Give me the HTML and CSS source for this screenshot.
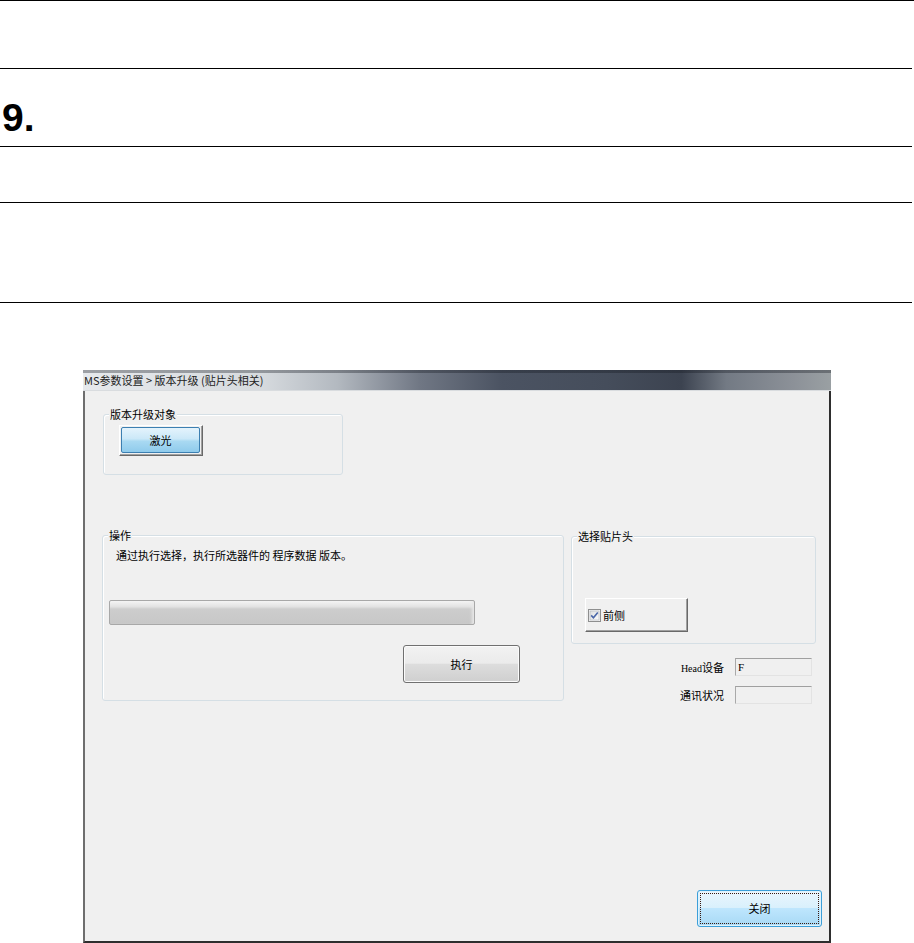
FILE: index.html
```html
<!DOCTYPE HTML>
<html>
    <head>
        <meta charset="UTF-8">
        <title>版本升级 (贴片头相关)</title>
        <link rel="stylesheet" href="styles.css">
    </head>
    <body>
        <div class="doc">
            <div class="row r1"></div>
            <div class="row r2"><h2 class="num">9.</h2></div>
            <div class="row r3"></div>
            <div class="row r4"></div>
        </div>

        <div class="window">
            <div class="titlebar">MS参数设置 &gt; 版本升级 (贴片头相关)</div>
            <div class="client">
                <div class="group g-target">
                    <div class="group-title">版本升级对象</div>
                    <div class="raised btn-laser"><span class="face">激光</span></div>
                </div>

                <div class="middle">
                    <div class="group g-op">
                        <div class="group-title">操作</div>
                        <p class="hint">通过执行选择，执行所选器件的 程序数据 版本。</p>
                        <div class="progress"></div>
                        <div class="btn btn-exec">执行</div>
                    </div>

                    <div class="side">
                        <div class="group g-head">
                            <div class="group-title">选择贴片头</div>
                            <div class="raised check-btn">
                                <svg class="checkbox" width="13" height="13" viewBox="0 0 13 13">
                                    <defs>
                                        <linearGradient id="cbfill" x1="0" y1="0" x2="1" y2="1">
                                            <stop offset="0" stop-color="#dcdedf"/>
                                            <stop offset="1" stop-color="#fbfbfb"/>
                                        </linearGradient>
                                    </defs>
                                    <rect x="0.5" y="0.5" width="12" height="12" fill="#f4f4f4" stroke="#8e8f8f"/>
                                    <rect x="2" y="2" width="9" height="9" fill="url(#cbfill)" stroke="#aeb3b9" stroke-width="0.6"/>
                                    <path d="M3.2 6.4 L5.4 8.8 L9.8 3.4" fill="none" stroke="#4a66a8" stroke-width="1.6"/>
                                </svg>
                                <span>前侧</span>
                            </div>
                        </div>
                        <div class="field-row">
                            <span class="field-label"><span class="latin">Head</span>设备</span>
                            <span class="field">F</span>
                        </div>
                        <div class="field-row">
                            <span class="field-label">通讯状况</span>
                            <span class="field"></span>
                        </div>
                    </div>
                </div>

                <div class="footer">
                    <div class="btn-close"><span class="focus">关闭</span></div>
                </div>
            </div>
        </div>
    </body>
</html>
```

FILE: styles.css
```css
body{margin:0;background:#ffffff;font-family:"Liberation Sans",Arial,sans-serif;color:#000;}
h2,p{margin:0;}

/* 文档表格线 */
.doc{border-top:1px solid #000;}
.doc .row{
    width: 912px;
    border-bottom: 1px solid #000;
}
.doc .r1{height:67px;}
.doc .r2{height:77px;}
.doc .r3{height:55px;}
.doc .r4{height:99px;}
.doc .num{
    padding: 29px 0 0 2px;
    font-size: 39px;
    line-height: 40px;
    font-weight: bold;
}

/* 窗口 */
.window{
    width: 748px;
    margin: 67px 0 0 83px;
    font-family: "Noto Sans CJK SC","Liberation Sans",sans-serif;
    font-size: 11px;
    color: #000;
}
.window .titlebar{
    height: 20px;
    padding-left: 1px;
    line-height: 20px;
    font-size: 11px;
    color: #222222;
    border-bottom: 1px solid #d9dcdf;
    background:
        linear-gradient(to bottom, rgba(20,24,32,.35) 0, rgba(20,24,32,.35) 3px, rgba(255,255,255,0) 3px),
        linear-gradient(to right, #e6e9ec 0%, #d6dade 24%, #b3b9c0 34%, #707784 45%, #4b5362 56%, #454d5b 70%, #3c4350 80%, #737a84 86%, #8c9198 95%, #9aa0a3 100%);
    white-space: nowrap;
}
.window .client{
    display: flex;
    flex-direction: column;
    height: 550px;
    background: #f0f0f0;
    border-left: 2px solid #6e6e6e;
    border-right: 2px solid #2e2e2e;
    border-bottom: 2px solid #2e2e2e;
}

/* 分组框 */
.group{
    box-sizing: border-box;
    border: 1px solid #d5dfe5;
    border-radius: 3px;
    box-shadow: inset 1px 1px 0 #ffffff;
}
.group .group-title{
    display: table;
    margin: -8px 0 0 5px;
    padding: 0 1px;
    line-height: 14px;
    background: #f0f0f0;
}
.g-target{
    width: 240px;
    height: 61px;
    margin: 23px 0 0 18px;
}

/* 立体按钮 */
.raised{
    box-sizing: border-box;
    border: 1px solid;
    border-color: #ffffff #696969 #696969 #ffffff;
    box-shadow: inset -1px -1px 0 #a0a0a0;
    background: #f0f0f0;
}
.btn-laser{
    width: 84px;
    height: 31px;
    margin: 4px 0 0 15px;
    padding: 1px 2px 2px 1px;
}
.btn-laser .face{
    display: block;
    box-sizing: border-box;
    height: 100%;
    border: 1px solid #3c7fb1;
    border-radius: 2px;
    line-height: 25px;
    text-align: center;
    background: linear-gradient(to bottom, #e4f3fc 0%, #cbe8f8 45%, #a9d9f2 55%, #8fcbec 100%);
}

.middle{
    display: flex;
    align-items: flex-start;
    margin-top: 60px;
}
.g-op{
    width: 462px;
    height: 166px;
    margin-left: 17px;
}
.g-op .hint{
    margin: 6px 0 0 13px;
    line-height: 14px;
}
.g-op .progress{
    box-sizing: border-box;
    width: 366px;
    height: 25px;
    margin: 38px 0 0 6px;
    border: 1px solid #a8a8a8;
    border-radius: 2px;
    background: linear-gradient(to bottom, #f4f4f4 0%, #e2e2e2 25%, #cdcdcd 35%, #c7c7c7 100%);
    box-shadow: inset -4px 0 3px -2px #e8e8e8;
}
.btn{
    box-sizing: border-box;
    border: 1px solid #707070;
    border-radius: 3px;
    text-align: center;
    box-shadow: inset 0 0 0 1px #fbfbfb;
    background: linear-gradient(to bottom, #f2f2f2 0%, #ebebeb 48%, #dddddd 50%, #cfcfcf 100%);
}
.btn-exec{
    width: 117px;
    height: 38px;
    margin: 20px 0 0 300px;
    line-height: 36px;
}

.side{
    width: 245px;
    margin: 1px 0 0 7px;
}
.g-head{height:108px;}
.check-btn{
    display: flex;
    align-items: center;
    gap: 2px;
    width: 103px;
    height: 34px;
    margin: 55px 0 0 13px;
    padding-left: 2px;
}
.check-btn .checkbox{display:block;}

.field-row{
    display: flex;
    justify-content: flex-end;
    align-items: center;
    margin-top: 10px;
    padding-right: 4px;
}
.g-head + .field-row{margin-top:14px;}
.field-label{margin-right:11px;}
.field-label .latin{
    font-family: "Liberation Serif",serif;
    font-size: 10px;
}
.field{
    box-sizing: border-box;
    width: 77px;
    height: 18px;
    padding-left: 2px;
    border: 1px solid;
    border-color: #a0a0a0 #e3e3e3 #e3e3e3 #a9a9a9;
    font-family: "Liberation Serif",serif;
    line-height: 16px;
}

.footer{
    display: flex;
    justify-content: flex-end;
    margin-top: auto;
    padding: 0 7px 14px 0;
}
.btn-close{
    box-sizing: border-box;
    width: 125px;
    height: 37px;
    padding: 2px;
    border: 1px solid #3c9fd9;
    border-radius: 3px;
    box-shadow: inset 0 0 0 1px #dff2fc;
    background: linear-gradient(to bottom, #eaf6fd 0%, #d9f0fc 48%, #bee6fd 50%, #a7d9f5 100%);
}
.btn-close .focus{
    display: block;
    box-sizing: border-box;
    height: 100%;
    border: 1px dotted #3a1a10;
    line-height: 29px;
    text-align: center;
}
```
